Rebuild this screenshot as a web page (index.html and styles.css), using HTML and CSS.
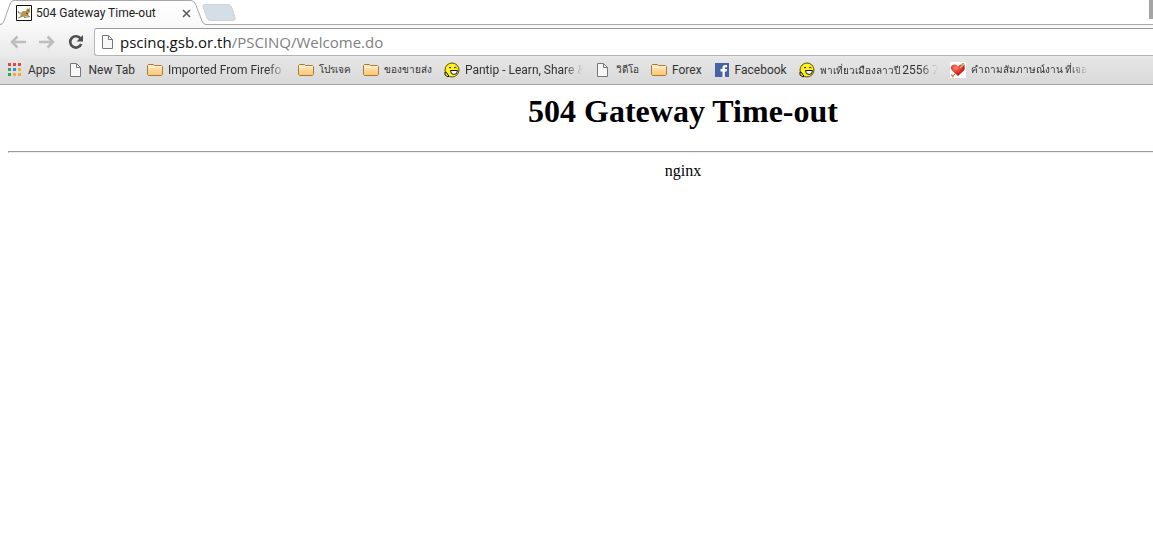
FILE: index.html
```html
<!DOCTYPE html>
<html lang="en">
<head>
<meta charset="utf-8">
<title>504 Gateway Time-out</title>
<link rel="stylesheet" href="styles.css">
</head>
<body>
<svg class="defs" width="0" height="0" aria-hidden="true">
  <defs>
    <linearGradient id="fold" x1="0" y1="0" x2="0" y2="1"><stop offset="0" stop-color="#ffedc4"/><stop offset="1" stop-color="#fbc56d"/></linearGradient>
    <radialGradient id="red" cx=".35" cy=".3" r=".75"><stop offset="0" stop-color="#ff8a70"/><stop offset=".5" stop-color="#e3362a"/><stop offset="1" stop-color="#a3120f"/></radialGradient>
    <linearGradient id="tabfill" x1="0" y1="0" x2="0" y2="1"><stop offset="0" stop-color="#fff"/><stop offset="1" stop-color="#f9f9f9"/></linearGradient>
  </defs>
  <symbol id="page" viewBox="0 0 16 16"><path d="M2.500 1.500h6l4 4v9h-10z" fill="#f7f7f7" stroke="#777"/><path d="M8.500 1.500v4h4" fill="none" stroke="#777"/></symbol>
  <symbol id="folder" viewBox="0 0 16 16"><path d="M.5 12.500v-9l1-1h5l1 1h7l1 1v8l-1 1h-13z" fill="url(#fold)" stroke="#a47a42"/><path d="M1.500 5.500h5l1-1h7" fill="none" stroke="#fff3d8"/></symbol>
  <symbol id="smile" viewBox="0 0 16 16"><circle cx="8" cy="8" r="7" fill="#fff21c" stroke="#5a5200"/><path d="M5 6q1-1.500 2 0M10 6q1.500-1.500 2.500 0" fill="none" stroke="#111"/><path d="M6.500 8.500h7q0 4-3.500 4t-3.500-4z" fill="#fff" stroke="#111"/><path d="M1 10l2 1 1 2 1 1-1 1-3-2z" fill="#fff21c" stroke="#111"/></symbol>
</svg>
<header class="chrome">
  <div class="tabs">
    <div class="tab">
      <svg class="tab-shape" width="206" height="26" viewBox="0 0 206 26" aria-hidden="true"><path d="M0 25.500Q3 24 4 21L10 4Q11 .5 14 .5H191Q194 .5 195.500 4L202 21Q203.500 24.500 206 24.500V26H0z" fill="url(#tabfill)"/><path d="M0 24.500Q3 24 4 21L10 4Q11 .5 14 .5H191Q194 .5 195.500 4L202 21Q203.500 24.500 206 24.500" fill="none" stroke="#a8a8a8"/></svg>
      <svg class="icon" viewBox="0 0 16 16" aria-hidden="true"><path d="M.5.500h15v15H.5z" fill="#fff" stroke="#111"/><path d="M4 12l1-4 2-2 3 0 1-3 1 1 2-1v4l-2 2 2 3-3-1-3 1-2-1z" fill="#b8954f"/><path d="M5 8Q2 9 2 6M2 13l5-2M8 12.500l6-1" fill="none" stroke="#8a7a5a"/><path d="M11.500 5.500h1M10 8l2 1" stroke="#443c2c"/></svg>
      <span class="tab-title">504 Gateway Time-out</span>
      <button class="close" aria-label="Close tab"><svg width="9" height="9" viewBox="0 0 9 9"><path d="M1 1l7 7M8 1L1 8" stroke="#5c5c5c" stroke-width="1.600"/></svg></button>
    </div>
    <button class="new-tab" aria-label="New tab"><svg width="34" height="17" viewBox="0 0 34 17"><path d="M3 .5H26Q28.500.500 29.500 3L33 13Q34 16.500 31 16.500H8Q6 16.500 5 14L1 3Q0 .5 3 .5z" fill="#d5dde5" stroke="#ccd3da"/></svg></button>
  </div>
  <nav class="toolbar" aria-label="Navigation">
    <button class="nav" aria-label="Back"><svg width="16" height="14" viewBox="0 0 16 14"><path d="M7.500 1.500L2 7l5.500 5.500M2 7h14" fill="none" stroke="#bdbdbd" stroke-width="2.500"/></svg></button>
    <button class="nav" aria-label="Forward"><svg width="16" height="14" viewBox="0 0 16 14"><path d="M8.500 1.500L14 7l-5.500 5.500M14 7H0" fill="none" stroke="#bdbdbd" stroke-width="2.500"/></svg></button>
    <button class="nav" aria-label="Reload"><svg width="16" height="16" viewBox="0 0 16 16"><path d="M12.500 4.500A5.700 5.700 0 1 0 13.200 10" fill="none" stroke="#4f4f4f" stroke-width="2.600"/><path d="M15 1v6.500H8.500z" fill="#4f4f4f"/></svg></button>
    <div class="omnibox" role="group" aria-label="Address">
      <svg class="icon" aria-hidden="true"><use href="#page"/></svg>
      <a class="url" href="#">pscinq.gsb.or.th<span class="path">/PSCINQ/Welcome.do</span></a>
    </div>
  </nav>
  <nav class="bookmarks" aria-label="Bookmarks">
    <a class="bm" href="#"><svg class="icon" viewBox="0 0 16 16"><path d="M1 1h3v3H1zM11 1h3v3h-3zM6 1h3v3H6z" fill="#db4a3e"/><path d="M1 6h3v3H1zM1 11h3v3H1z" fill="#35a35a"/><path d="M6 6h3v3H6z" fill="#4285e8"/><path d="M11 6h3v3h-3zM11 11h3v3h-3zM6 11h3v3H6z" fill="#efad2d"/></svg><span>Apps</span></a>
    <a class="bm" href="#"><svg class="icon"><use href="#page"/></svg><span>New Tab</span></a>
    <a class="bm" href="#"><svg class="icon"><use href="#folder"/></svg><span class="long">Imported From Firefo</span></a>
    <a class="bm" href="#"><svg class="icon"><use href="#folder"/></svg><span class="thai" lang="th">โปรเจค</span></a>
    <a class="bm" href="#"><svg class="icon"><use href="#folder"/></svg><span class="thai" lang="th">ของขายส่ง</span></a>
    <a class="bm" href="#"><svg class="icon"><use href="#smile"/></svg><span class="long">Pantip - Learn, Share &amp;</span></a>
    <a class="bm" href="#"><svg class="icon"><use href="#page"/></svg><span class="thai" lang="th">วิดีโอ</span></a>
    <a class="bm" href="#"><svg class="icon"><use href="#folder"/></svg><span>Forex</span></a>
    <a class="bm" href="#"><svg class="icon" viewBox="0 0 16 16"><path d="M1 1h14v14H1z" fill="#4862a3"/><path d="M8.500 15V9.500H6.500V7h2V5.500Q8.500 3 11 3h2v2.200h-1.300q-.9 0-.9.900V7H13l-.4 2.500h-1.800V15z" fill="#fff"/></svg><span>Facebook</span></a>
    <a class="bm" href="#"><svg class="icon"><use href="#smile"/></svg><span class="long thai" lang="th">พาเที่ยวเมืองลาวปี <span class="num">2556 7</span></span></a>
    <a class="bm" href="#"><svg class="icon" viewBox="0 0 16 16"><path d="M0 0h16v16H0z" fill="#fff"/><path d="M2 15l3-3M11 5l3-3.500M12.500 1v2.500H15M1 12.500L3.500 15" fill="none" stroke="#c08a50" stroke-width="1.300"/><path d="M8 14L2 8.500Q-.5 5 2.500 3 6 1.500 8 4.500q2-3 5-1.500 3 2 1 5.500z" fill="url(#red)"/><path d="M10 6l4-4" stroke="#e8b98a" stroke-width="1.500"/></svg><span class="long thai" lang="th">คำถามสัมภาษณ์งาน ที่เจอ</span></a>
  </nav>
  <span class="window-edge"></span>
</header>
<main class="error">
  <h1>504 Gateway Time-out</h1>
  <hr>
  <p>nginx</p>
</main>
</body>
</html>
```
FILE: styles.css
```css
* { box-sizing: border-box; }
body { margin: 0; background: #fff; overflow: hidden; font-family: Roboto, "Noto Sans", sans-serif; }
.defs { position: absolute; }
button { border: 0; padding: 0; background: none; display: flex; align-items: center; justify-content: center; }
a { color: inherit; text-decoration: none; }
.icon { width: 16px; height: 16px; flex: none; }
.chrome { position: relative; font-size: 12px; color: #333; }
.tabs { display: flex; height: 25px; border-bottom: 1px solid #a8a8a8; }
.tab { position: relative; display: flex; align-items: center; gap: 4px; width: 202px; height: 26px; padding: 0 10px 0 16px; }
.tab-shape { position: absolute; left: 0; top: 0; }
.tab > :not(.tab-shape) { position: relative; }
.tab-title { flex: 1; white-space: nowrap; color: #222; }
.close { width: 11px; height: 16px; }
.new-tab { align-self: flex-start; padding-top: 4px; }
.toolbar { display: flex; align-items: center; height: 33px; padding-left: 3px; background: linear-gradient(#f9f9f9, #e8e8e8); }
.nav { width: 29px; height: 29px; }
.omnibox { display: flex; flex: 1; align-items: center; gap: 4px; height: 28px; margin-left: 4px; padding-left: 5px; background: #fff; border: 1px solid #b4b4b4; border-right: 0; border-top-color: #999; border-radius: 3px 0 0 3px; font-family: "Open Sans", sans-serif; font-size: 15px; color: #111; }
.path { color: #808080; }
.bookmarks { display: flex; align-items: center; gap: 12px; height: 27px; padding: 0 0 2px 7px; background: linear-gradient(#e6e6e6, #d9d9d9); border-bottom: 1px solid #a6a6a6; }
.bm { display: flex; flex: none; align-items: center; gap: 5px; white-space: nowrap; line-height: 20px; }
.long { width: 118px; overflow: hidden; mask-image: linear-gradient(90deg, #000 84%, transparent); }
.thai { font-size: 10px; }
.num { font-size: 12px; }
.window-edge { position: absolute; right: 0; top: 0; width: 4px; height: 19px; background: #a5a5a5; }
.error { margin: 8px -205px 0 8px; text-align: center; font-family: "Liberation Serif", serif; font-size: 16px; color: #000; }
h1 { margin: 0 0 21px; font-size: 32px; line-height: 37px; }
hr { margin: 0 0 8px; }
p { margin: 0; line-height: 20px; }
```
